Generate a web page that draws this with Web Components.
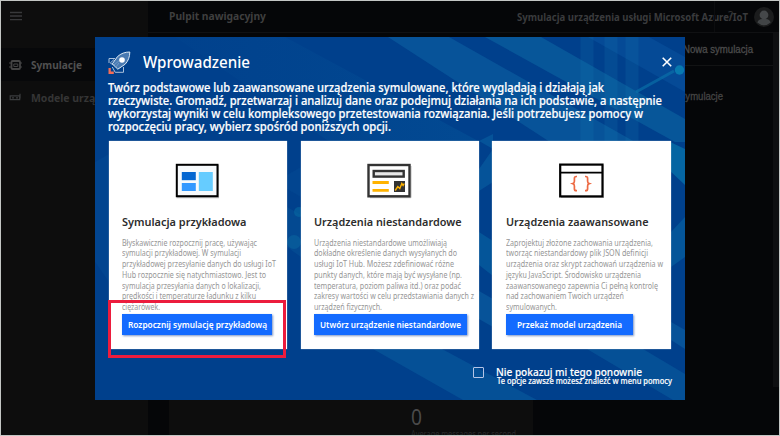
<!DOCTYPE html>
<html lang="pl">
<head>
<meta charset="utf-8">
<title>Symulacja urządzenia</title>
<style>
html,body{margin:0;height:100%;overflow:hidden;background:#050608}
body{font-family:"Noto Sans","Open Sans",sans-serif}
</style>
</head>
<body>
<sim-app></sim-app>
<script>
// One line of text, condensed or stretched to the width given in "w".
class FitLine extends HTMLElement{
  connectedCallback(){
    if(!this.shadowRoot){
      this.attachShadow({mode:'open'}).innerHTML='<style>:host{display:block;white-space:nowrap}span{display:inline-block;transform-origin:0 50%}</style><span><slot></slot></span>';
    }
    const s=this.shadowRoot.querySelector('span'),w=+this.getAttribute('w'),n=s.offsetWidth?s.getBoundingClientRect().width:0;
    if(w&&n)s.style.transform='scaleX('+(w/n)+')';
    if(w)this.style.width=w+'px';
  }
}
customElements.define('fit-line',FitLine);

class SideNav extends HTMLElement{
  constructor(){super();this.attachShadow({mode:'open'}).innerHTML=`
<style>
:host{display:block;width:147px;height:100%;background:#0d0d0d;color:#434343;font-weight:700;font-size:11px;overflow:hidden}
.top{height:47px;padding:10px 0 0 9px;box-sizing:border-box}
.row{display:flex;align-items:center;height:33px;padding-left:8px;gap:8px}
.row.on{background:#07080a;color:#505050}
svg{display:block;flex:none}
</style>
<div class="top"><svg width="12" height="10" stroke="#38393b" stroke-width="1.3"><path d="M0 1.5h12M0 5h12M0 8.6h12"/></svg></div>
<div class="row on"><svg width="14" height="12" fill="none" stroke="#444" stroke-width="1.8"><rect x="2.5" y="2" width="8.5" height="8" rx="1"/><path d="M4.8 5v2.5h4V5zM0 4h2M0 8h2M11 4h2M11 8h2" stroke-width="1"/></svg><fit-line w="51">Symulacje</fit-line></div>
<div class="row" style="height:32px;color:#353535"><svg width="14" height="12" fill="none" stroke="#3b3d3f" stroke-width="1.2"><path d="M1.2 4.8h9.5v3.8H1.2zM11 7.5V2.8M3 6.8h2M7 6.8h2"/></svg><fit-line w="89">Modele urządzeń</fit-line></div>`}
}
customElements.define('side-nav',SideNav);

class DashBoard extends HTMLElement{
  constructor(){super();this.attachShadow({mode:'open'}).innerHTML=`
<style>
:host{display:flex;flex-direction:column;flex:1;min-width:0;height:100%;color:#3f3f3f;position:relative}
header{display:flex;height:31px;border-bottom:1px solid #101113;padding:0 5px 0 21px;align-items:center;font-size:11px;font-weight:700;box-sizing:content-box;flex:none}
.prod{margin-left:auto;margin-right:6px;color:#3a3b3d;font-weight:700}
.help{position:absolute;left:580px;top:7px;font-size:12px;line-height:16px;color:#303132}
.sep{position:absolute;left:566px;top:0;width:1px;height:31px;background:#0c0d0f}
header fit-line{margin-top:-2px}header .prod{margin-top:0}
svg{display:block}
.content{flex:1;display:flex;min-height:0}
.pane{flex:1;display:flex;flex-direction:column}
.bar{height:32px;border-bottom:1px solid #121314;display:flex;justify-content:flex-end;align-items:center;padding-right:20px;font:500 10px "Liberation Sans",sans-serif;color:#4b4b4b;-webkit-text-stroke:.3px}
.sub{display:flex;justify-content:flex-end;padding:23px 50px 0 0;font:500 10px/16px "Liberation Sans",sans-serif;color:#444;-webkit-text-stroke:.3px}
.stat{margin:auto 0 0 21px;width:364px;height:84px;background:#0d0d0d;box-sizing:border-box;padding:53px 15px 0 242px;overflow:hidden;color:#4a4a4a;font-size:22px;line-height:24px}
.cap{font-size:9px;line-height:13px;color:#292a2b;margin-top:-1px}
.scroll{width:6px;height:354px;background:#0e0f11}
</style>
<header><fit-line w="97">Pulpit nawigacyjny</fit-line><fit-line class="prod" w="231">Symulacja urządzenia usługi Microsoft Azure/IoT</fit-line>
<svg width="20" height="20"><circle cx="10" cy="10" r="10" fill="#1b1c1d"/><circle cx="10" cy="8" r="4.4" fill="#45484a"/><path d="M3.3 15.5q1.2-3.3 4.7-3.5h4q3.5.2 4.7 3.5Q10 21 3.3 15.5z" fill="#414446"/></svg></header>
<div class="sep"></div><div class="help">?</div>
<div class="content"><div class="pane"><div class="bar"><fit-line w="70">Nowa symulacja</fit-line></div><div class="sub"><fit-line w="44">Symulacje</fit-line></div>
<div class="stat"><fit-line w="11">0</fit-line><fit-line class="cap" w="105">Average messages per second</fit-line></div></div><div class="scroll"></div></div>`}
}
customElements.define('dash-board',DashBoard);

class OptionCard extends HTMLElement{
  constructor(){super();this.attachShadow({mode:'open'}).innerHTML=`
<style>
:host{display:flex;flex-direction:column;width:178.5px;height:208.5px;background:#fff;box-sizing:border-box;box-shadow:0 0 1px #b9c6dd;padding:22px 0 0 13.5px}
.ico{height:36px;display:flex;padding-left:53px}
.h{height:22px;line-height:22px;margin-top:12px;font-size:11.5px;font-weight:600;color:#2d2d2d}
.t{margin-top:5px;height:76px;font-size:8.4px;line-height:10.75px;color:#969696}
.b{align-self:flex-start;box-sizing:border-box;height:21px;line-height:21px;margin-top:.8px;background:#146bff;color:#fff;font-size:9.2px;font-weight:600;box-shadow:1px 1px 2px #7f96c4;display:flex;justify-content:center}
</style>
<div class="ico"><slot name="icon"></slot></div><div class="h"><slot name="title"></slot></div><div class="t"><slot></slot></div><div class="b"><slot name="action"></slot></div>`}
  connectedCallback(){this.shadowRoot.querySelector('.b').style.width=this.getAttribute('bw')+'px'}
}
customElements.define('option-card',OptionCard);

class WelcomeDialog extends HTMLElement{
  constructor(){super();this.attachShadow({mode:'open'}).innerHTML=`
<style>
:host{display:flex;flex-direction:column;width:590px;height:363px;box-sizing:border-box;background:#00408c;color:#fff;overflow:hidden;padding-left:13px;z-index:1;isolation:isolate}
.bg{position:absolute;inset:0;z-index:-1}
.head{display:flex;height:44px;align-items:center;padding:0 13px 0 0;box-sizing:border-box}
.head .title{font-size:17px;font-weight:500;line-height:24px;margin:6px 0 0 12px}
.head .x{margin:5px 0 0 auto}
.intro{font-size:11.7px;font-weight:500;line-height:13px;height:59.5px;box-sizing:border-box;margin-left:-.5px;-webkit-text-stroke:.2px}
.cards{display:flex;gap:13.3px;margin-left:.5px;flex:none}
.foot{display:flex;margin:16px 0 0 365px;gap:12px;align-items:flex-start}
.box{width:8.5px;height:8.5px;border:1px solid #b4c4e6;margin-top:2px;border-radius:1px}
.foot .a{font-size:11.2px;line-height:13px;font-weight:500;-webkit-text-stroke:.15px}
.foot .c{font-size:8.2px;line-height:8px;font-weight:500;margin:-1px 0 0 1px;-webkit-text-stroke:.15px}
.mark{position:absolute;left:13px;top:263px;width:172px;height:52px;border:3px solid #ec1c3d}
svg{display:block;flex:none}
</style>
<svg class="bg" width="590" height="363">
<defs><linearGradient id="g" x1="0" x2="1"><stop offset="0" stop-color="#0c5b9d" stop-opacity=".15"/><stop offset="1" stop-color="#086ba8" stop-opacity=".65"/></linearGradient></defs>
<path d="M80 0H190L385 105H235z" fill="url(#g)" opacity=".35"/>
<path d="M293 0H354L540 105H455z" fill="#0b5e9f" opacity=".65"/>
<path d="M390 0H446L590 82V105H580z" fill="#0a609e" opacity=".7"/>
<path d="M493 0H554L590 20V55z" fill="#064c99" opacity=".8"/>
<path d="M492 0V105M516 0V105M537 0V105" stroke="#1680b5" stroke-width="13" opacity=".18"/>
<path d="M541 55L579 34" stroke="#0b76ac" stroke-width="3" opacity=".6"/><circle cx="584.5" cy="33" r="4.7" fill="#0879af"/>
<path d="M0 125L14 117V245L0 225zM192 138L206 130V160L192 152z" fill="#07539a" opacity=".25"/>
<path d="M384 104L398 97V145L384 154zM384 104V132L398 112z" fill="#0a65a5" opacity=".5"/>
<path d="M573 104L590 112V148L573 132z" fill="#087aad" opacity=".65"/>
<path d="M192 170L206 178V220L192 210z" fill="#0a60a0" opacity=".3"/><circle cx="204" cy="175" r="5" fill="#0870a6" opacity=".5"/><circle cx="199" cy="205" r="7" fill="#075999"/>
<path d="M384 195L398 204V239L384 228zM576 195L590 180V220L576 230z" fill="#086aa5" opacity=".5"/>
<path d="M278 312H347L442 363H368zM492 312H548L590 337V363H578z" fill="#0a5d9e" opacity=".55"/>
<path d="M384 254L398 262V290L384 282zM576 285L590 293V312L576 303z" fill="#075399"/>
</svg>
<div class="head"><svg width="23" height="23" viewBox="0 0 23 23" style="margin-top:6px"><g fill="none" stroke="#a9bfda" stroke-width="1"><path d="M6 8.5L2.3 12l4.5 3M15.5 16v5.3H7.2L4.3 16M1 12V7.5h6"/></g><path d="M21.8 1Q14.5 1 9.5 5.6L4.3 12.8l5.5 5.4 7.4-5Q21.8 8.2 21.8 1z" fill="#497ab2" stroke="#dbe8f4" stroke-width="1"/><circle cx="14" cy="9" r="2.8" fill="#fff"/><path d="M5.5 14.5L11 9.7M7 17l4-5" stroke="#6f98c6"/><path d="M.5 17h2.3v3.4h3V23H.5z" fill="#f26c57"/></svg><fit-line class="title" w="107">Wprowadzenie</fit-line><svg class="x" width="10" height="10" stroke="#fff" stroke-width="1.6"><path d="M.7.7l8.5 8.5M9.2.7L.7 9.2"/></svg></div>
<div class="intro"><fit-line w="496">Twórz podstawowe lub zaawansowane urządzenia symulowane, które wyglądają i działają jak</fit-line><fit-line w="554">rzeczywiste. Gromadź, przetwarzaj i analizuj dane oraz podejmuj działania na ich podstawie, a następnie</fit-line><fit-line w="535">wykorzystaj wyniki w celu kompleksowego przetestowania rozwiązania. Jeśli potrzebujesz pomocy w</fit-line><fit-line w="283">rozpoczęciu pracy, wybierz spośród poniższych opcji.</fit-line></div>
<div class="cards">
<option-card bw="149.5">
<svg slot="icon" width="45" height="36"><rect x="2.3" y="2.5" width="41" height="32" fill="none" stroke="#bbb" stroke-width="1.5"/><rect x="1.8" y="1.8" width="40.7" height="31.4" fill="#f7fafc" stroke="#000" stroke-width="2"/><path d="M6.8 9h14v8.2h-14z" fill="#0567d1"/><path d="M6.8 20h14v8h-14z" fill="#3399ff"/><path d="M23.8 9h14v19h-14z" fill="#66ccff"/></svg>
<fit-line slot="title" w="124.5">Symulacja przykładowa</fit-line>
<fit-line w="135">Błyskawicznie rozpocznij pracę, używając</fit-line><fit-line w="119">symulacji przykładowej. W symulacji</fit-line><fit-line w="154">przykładowej przesyłanie danych do usługi IoT</fit-line><fit-line w="144">Hub rozpocznie się natychmiastowo. Jest to</fit-line><fit-line w="139">symulacja przesyłania danych o lokalizacji,</fit-line><fit-line w="134">prędkości i temperaturze ładunku z kilku</fit-line><fit-line w="38">ciężarówek.</fit-line>
<fit-line slot="action" w="139">Rozpocznij symulację przykładową</fit-line></option-card>
<option-card bw="152.5">
<svg slot="icon" width="45" height="36"><path d="M3 34.7h41V3" fill="none" stroke="#bbb"/><rect x="1.5" y="2" width="41" height="31.3" fill="#fff" stroke="#333" stroke-width="2.4"/><rect x="6.7" y="8" width="30" height="5.6" fill="#e8e8e8" stroke="#333" stroke-width="2.4"/><path d="M5.5 19.5h16.3M5.5 27.3h16.3" stroke="#ffb300" stroke-width="2.8"/><path d="M27 18h11v11H27z" fill="#333"/><path d="M28.2 27.5l2.6-4 2 2 2-5 1.3 2 1.2-2" fill="none" stroke="#ffb300" stroke-width="1.4"/></svg>
<fit-line slot="title" w="147.5">Urządzenia niestandardowe</fit-line>
<fit-line w="133">Urządzenia niestandardowe umożliwiają</fit-line><fit-line w="143">dokładne określenie danych wysyłanych do</fit-line><fit-line w="140">usługi IoT Hub. Możesz zdefiniować różne</fit-line><fit-line w="148">punkty danych, które mają być wysyłane (np.</fit-line><fit-line w="147">temperatura, poziom paliwa itd.) oraz podać</fit-line><fit-line w="160">zakresy wartości w celu przedstawiania danych z</fit-line><fit-line w="68">urządzeń fizycznych.</fit-line>
<fit-line slot="action" w="141">Utwórz urządzenie niestandardowe</fit-line></option-card>
<option-card bw="127.5">
<svg slot="icon" width="45" height="36"><path d="M2 34.5h43V2" fill="none" stroke="#bbb"/><rect x="1.2" y="1.6" width="42.3" height="31.8" fill="#fff" stroke="#000" stroke-width="2.2"/><path d="M2 9.7h41" stroke="#000" stroke-width="1.8"/><path d="M18 13.5h-.8q-1.8 0-1.8 2v2.8q0 1.8-1.6 2.3 1.6.5 1.6 2.3v2.8q0 2 1.8 2h.8M26 13.5h.8q1.8 0 1.8 2v2.8q0 1.8 1.6 2.3-1.6.5-1.6 2.3v2.8q0 2-1.8 2H26" fill="none" stroke="#ed6a43" stroke-width="1.7"/></svg>
<fit-line slot="title" w="142.5">Urządzenia zaawansowane</fit-line>
<fit-line w="147">Zaprojektuj złożone zachowania urządzenia,</fit-line><fit-line w="142">tworząc niestandardowy plik JSON definicji</fit-line><fit-line w="157">urządzenia oraz skrypt zachowań urządzenia w</fit-line><fit-line w="135">języku JavaScript. Środowisko urządzenia</fit-line><fit-line w="152">zaawansowanego zapewnia Ci pełną kontrolę</fit-line><fit-line w="118">nad zachowaniem Twoich urządzeń</fit-line><fit-line w="51">symulowanych.</fit-line>
<fit-line slot="action" w="105">Przekaż model urządzenia</fit-line></option-card>
</div>
<div class="foot"><div class="box"></div><div><fit-line class="a" w="146">Nie pokazuj mi tego ponownie</fit-line><fit-line class="c" w="175">Te opcje zawsze możesz znaleźć w menu pomocy</fit-line></div></div>
<div class="mark"></div>`}
}
customElements.define('welcome-dialog',WelcomeDialog);

class SimApp extends HTMLElement{
  constructor(){super();this.attachShadow({mode:'open'}).innerHTML=`
<style>:host{display:flex;width:780px;height:436px;box-sizing:border-box;border:1px solid #c3c6c4;background:#050608;position:relative;overflow:hidden}
welcome-dialog{position:absolute;left:94.3px;top:36px}</style>
<side-nav></side-nav><dash-board></dash-board><welcome-dialog></welcome-dialog>`}
}
customElements.define('sim-app',SimApp);
</script>
</body>
</html>
